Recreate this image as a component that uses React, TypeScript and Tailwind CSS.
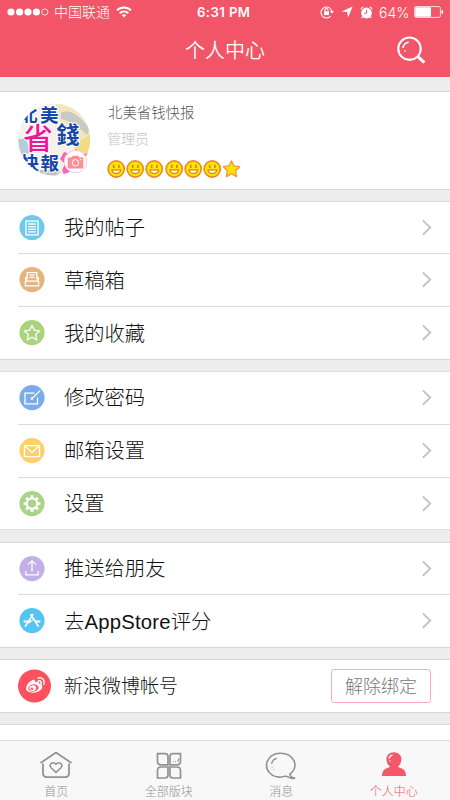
import type { ReactNode } from "react";

const cjk = "font-['Liberation_Sans','Noto_Sans_CJK_SC',sans-serif]";

function Disc({ color, children }: { color: string; children: ReactNode }) {
  return (
    <svg width="26" height="26" viewBox="0 0 26 26" fill="none" stroke="#fff" strokeWidth="1.3" className="shrink-0">
      <circle cx="13" cy="12.6" r="12.6" fill={color} stroke="none" />
      <g transform="translate(0 -.4)">{children}</g>
    </svg>
  );
}

function Chevron() {
  return (
    <svg width="12" height="18" viewBox="0 0 12 18" fill="none" stroke="#c4c4c8" strokeWidth="2" className="mr-[17px]">
      <path d="M1.8 1.4 9.2 8.6 1.8 15.8" />
    </svg>
  );
}

function Row({ icon, label, height, last, text = "" }: { icon: ReactNode; label: string; height: string; last?: boolean; text?: string }) {
  return (
    <div className={`ml-[18px] flex items-center ${height} ${last ? "" : "border-b border-[#dadadc]"}`}>
      <span className="ml-px flex">{icon}</span>
      <span className={`ml-[19px] flex-1 whitespace-nowrap text-[20.3px] leading-6 text-[#111] ${text}`}>{label}</span>
      <Chevron />
    </div>
  );
}

function Smiley() {
  return (
    <svg width="19.2" height="20" viewBox="0 0 19.2 20">
      <circle cx="9.2" cy="10" r="8.1" fill="#ffe500" stroke="#e88a2c" strokeWidth="1.6" />
      <path d="M6.7 5.8v3.2M11.9 5.8v3.2" stroke="#d9752a" strokeWidth="1.5" />
      <path d="M5 10.8h8.6c-.3 5-8.3 5-8.6 0Z" fill="#fff9c8" stroke="#df7d25" strokeWidth="1.2" />
    </svg>
  );
}

function StatusBar() {
  return (
    <div className="flex h-6 items-center pl-[7px] text-white">
      <svg width="42" height="10" viewBox="0 0 42 10" fill="#fff">
        <circle cx="4" cy="5" r="3.6" />
        <circle cx="12.6" cy="5" r="3.6" />
        <circle cx="21" cy="5" r="3.6" />
        <circle cx="29.4" cy="5" r="3.6" />
        <circle cx="37.8" cy="5" r="3.1" fill="none" stroke="#fff" strokeWidth="0.8" />
      </svg>
      <span className="ml-[5px] w-[57px] whitespace-nowrap text-[14px] font-light leading-5">中国联通</span>
      <svg width="16" height="12" viewBox="0 0 16 12" fill="none" stroke="#fff" strokeWidth="1.9" className="ml-[5px]">
        <path d="M1 4.4c3.8-3.9 10.2-3.9 14 0M3.6 7.2c2.6-2.4 6.2-2.4 8.8 0" />
        <path d="M5.6 9.1c1.4-1.2 3.4-1.2 4.8 0L8 11.6Z" fill="#fff" stroke="none" />
      </svg>
      <span className="ml-[65px] w-[58px] whitespace-nowrap pt-[2px] font-['Inter','Liberation_Sans',sans-serif] text-[13.2px] font-semibold tracking-[0.4px]">6:31 PM</span>
      <svg width="14" height="14" viewBox="0 0 14 14" fill="none" stroke="#fff" strokeWidth="1.1" className="ml-[65px]">
        <path d="M10.6 11.2A5.5 5.5 0 1 1 12 7" />
        <path d="M9.8 6h4L12 8.8Z" fill="#fff" stroke="none" />
        <path d="M4 6.4h5v3.7H4Z" fill="#fff" stroke="none" />
        <path d="M5 6.4V5a1.5 1.5 0 0 1 3 0v1.4" />
      </svg>
      <svg width="12" height="12" viewBox="0 0 12 12" fill="#fff" className="ml-[7px]">
        <path d="M11.6.4 7.1 11.4 6.2 6 .6 5.6Z" />
      </svg>
      <svg width="13" height="13" viewBox="0 0 13 13" fill="#fff" className="ml-[7px]">
        <circle cx="6.5" cy="7" r="5.4" />
        <path d="M.6 3.7A3 3 0 0 1 4 .8ZM12.4 3.7A3 3 0 0 0 9 .8ZM2 10l-.6 2.4 2.2-.8ZM11 10l.6 2.4-2.2-.8Z" />
        <path d="M6.6 3.8v3.4H4.2" fill="none" stroke="#f05567" />
      </svg>
      <span className="ml-[6px] w-[32px] whitespace-nowrap pt-px font-['Inter','Liberation_Sans',sans-serif] text-[14px] font-light">64%</span>
      <svg width="30" height="12" viewBox="0 0 30 12" className="ml-[3px]">
        <rect x=".6" y=".6" width="25.8" height="10.8" rx="1.5" fill="none" stroke="#fff" strokeWidth=".8" />
        <rect x="1.2" y="1.2" width="15.8" height="9.6" rx=".8" fill="#fff" />
        <path d="M27.5 4q1.8 0 1.8 2t-1.8 2Z" fill="#fff" />
      </svg>
    </div>
  );
}

function Avatar() {
  return (
    <div className="relative ml-[18px] size-[73px] shrink-0">
      <svg width="73" height="73" viewBox="0 0 73 73" className="overflow-visible">
        <defs>
          <clipPath id="face"><circle cx="36.2" cy="35.5" r="36" /></clipPath>
        </defs>
        <g clipPath="url(#face)">
          <rect width="73" height="73" fill="#f3f1ea" />
          <path d="M38 0h35v36H55L40 14Z" fill="#f1e6bd" />
          <path d="M43 9c9-5 18 2 29 16l-3 6C58 20 51 17 43 15Z" fill="#c9c8c3" />
          <path d="M57 40 73 30v37l-12 5-5-18Z" fill="#f1dc85" />
          <path d="M0 35h8l5 14-13 3Z" fill="#b9cbd8" />
          <path d="M22 66 43 67 37 73H20Z" fill="#b9c3ba" />
          <path d="m46 48 6 2 6-5 5 6 8-2-1 21-23 3-3-7 3-6-5-5Z" fill="#ff62ba" />
          <g className="font-['Noto_Sans_CJK_SC',sans-serif]" strokeLinejoin="round" paintOrder="stroke">
            <g fill="#1646a9" stroke="#fff" strokeWidth="2" fontWeight="700">
              <text x="2.5" y="17" fontSize="17">北</text>
              <text x="22" y="17.5" fontSize="18.5">美</text>
              <text x="38.5" y="39" fontSize="23">錢</text>
              <text x="2.5" y="66" fontSize="18.5">快</text>
              <text x="22.5" y="66" fontSize="18.5">報</text>
            </g>
            <text x="5" y="45" fontSize="30" fontWeight="500" fill="#ee169d" stroke="#fff" strokeWidth="2">省</text>
          </g>
        </g>
        <circle cx="57.5" cy="57.6" r="11.2" fill="#fff" stroke="#f3cce0" strokeWidth="1" />
        <path d="M50.5 53.5h3l1-1.7h6l1 1.7h3q.8 0 .8.8v9.4q0 .8-.8.8h-14q-.8 0-.8-.8v-9.4q0-.8.8-.8Z" fill="#ff8f96" />
        <circle cx="57.5" cy="58.8" r="3.2" fill="none" stroke="#fff" />
        <path d="M61.8 55.7h1.8" stroke="#fff" />
      </svg>
    </div>
  );
}

function Tab({ label, active, children }: { label: string; active?: boolean; children: ReactNode }) {
  return (
    <div className={`flex flex-1 flex-col items-center pt-[9px] ${active ? "text-[#f4566a]" : "text-[#929292]"}`}>
      <svg width="34" height="30" viewBox="0 0 34 30" fill="none" stroke="currentColor" strokeWidth="1.6">{children}</svg>
      <span className="mt-[4px] whitespace-nowrap text-[12px] font-light leading-4">{label}</span>
    </div>
  );
}

export default function App() {
  return (
    <div className={`flex h-[800px] w-[450px] flex-col overflow-hidden bg-[#ededed] font-light ${cjk}`}>
      <header className="h-[77px] shrink-0 bg-[#f15567]">
        <StatusBar />
        <div className="flex h-[53px] items-center text-white">
          <span className="w-[37px]" />
          <h1 className="flex-1 pl-[17px] pt-px text-center text-[20px] font-[350] leading-7">个人中心</h1>
          <svg width="30" height="30" viewBox="0 0 30 30" fill="none" stroke="#fff" strokeWidth="2.1" className="mr-[24px]">
            <circle cx="13.5" cy="12.7" r="11.2" />
            <path d="m21.6 20.4 6.8 6.2" strokeWidth="3" />
            <path d="M7 12c.3-3 2.7-5.5 5.8-5.7" strokeWidth="1.6" />
            <path d="M8 15h1.6" strokeWidth="1.5" />
          </svg>
        </div>
      </header>

      <section className="mt-[14px] flex h-[99px] shrink-0 items-center border-y border-[#d8d8da] bg-white">
        <Avatar />
        <div className="ml-[16px] flex flex-col">
          <span className="ml-px text-[14.4px] leading-5 text-[#555]">北美省钱快报</span>
          <span className="mt-[6px] text-[14px] leading-5 text-[#c2c2c2]">管理员</span>
          <div className="mt-[10px] flex h-5 items-center">
            <Smiley /><Smiley /><Smiley /><Smiley /><Smiley /><Smiley />
            <svg width="20" height="20" viewBox="0 0 20 20" fill="#ffe000" stroke="#ea963a" strokeWidth="1.2" strokeLinejoin="round">
              <path d="m9.5 1.8 2.5 5.1 5.7.8-4.1 4 1 5.9-5.1-2.8-5.1 2.8 1-5.9-4.1-4 5.7-.8Z" />
            </svg>
          </div>
        </div>
      </section>

      <section className="mt-[11px] shrink-0 border-y border-[#d8d8da] bg-white">
        <Row label="我的帖子" height="h-[52px]" icon={<Disc color="#70c9e8"><path d="M7 6.5h12v13.7H7ZM9.2 9.4h7.6M9.2 12h7.6M9.2 14.6h7.6M9.2 17.2h7.6" /></Disc>} />
        <Row label="草稿箱" height="h-[53px]" text="pt-[2px]" icon={<Disc color="#e3b57d"><path d="M8.2 13V6h9.6v7M10.5 8.5h5M10.5 10.8h5M8.2 11H6.8v3.5h12.4V11h-1.4M6.4 14.5v4.8h13.2v-4.8" /></Disc>} />
        <Row label="我的收藏" height="h-[52px]" text="pt-[2px]" last icon={<Disc color="#a9d47d"><path d="m13 5.8 2.3 4.8 5.2.7-3.8 3.6.9 5.2-4.6-2.5-4.6 2.5.9-5.2-3.8-3.6 5.2-.7Z" /></Disc>} />
      </section>

      <section className="mt-[11px] shrink-0 border-y border-[#dfdfe0] bg-white">
        <Row label="修改密码" height="h-[53px]" icon={<Disc color="#7aace8"><path d="M15.5 8.5H6v10.8h12.5V13M12.2 14.7l9-8.7M12.2 14.7l.4-1.8M12.2 14.7l1.9-.4" /></Disc>} />
        <Row label="邮箱设置" height="h-[53px]" icon={<Disc color="#ffd16d"><path d="M5.5 8h15v11h-15Zm.4.4 7.1 6.4 7.1-6.4" /></Disc>} />
        <Row label="设置" height="h-[51px]" text="pt-px" last icon={<Disc color="#a9d487"><circle cx="13" cy="13" r="5.2" strokeWidth="2.2" /><path d="M13 7.3V4.6M13 21.4v-2.7M7.3 13H4.6M21.4 13h-2.7M9 9 7.1 7.1M18.9 18.9 17 17M9 17l-1.9 1.9M18.9 7.1 17 9" strokeWidth="2.8" /></Disc>} />
      </section>

      <section className="mt-[12px] shrink-0 border-y border-[#d8d8da] bg-white">
        <Row label="推送给朋友" height="h-[52px]" icon={<Disc color="#c2afe8"><path d="M13 16V5.5M9 9l4-3.8L17 9M6.8 15.3v4h12.4v-4" /></Disc>} />
        <Row label="去AppStore评分" height="h-[52px]" text="pt-px tracking-[0.2px]" last icon={<Disc color="#54c5f2"><path d="M4.6 13.8H12M16.5 13.8h4.9" strokeWidth="2" /><path d="M14.2 6.5 6 19.2M11.4 6.5l8.2 12.7" strokeWidth="1.6" /><path d="m9.6 15.6 6-4.6" strokeWidth="1" /></Disc>} />
      </section>

      <section className="mt-[11px] flex h-[54px] shrink-0 items-center border-y border-[#d8d8da] bg-white">
        <svg width="34" height="34" viewBox="0 0 34 34" className="ml-[18px] shrink-0">
          <circle cx="16.5" cy="17" r="16.5" fill="#ff505f" />
          <path d="M14.5 11.1c1.9-.8 3 .1 2.4 2.1 2.2-1 4.7-.9 4.1 1.3 5 1.2 4.1 5.8-.7 8-5.4 2.4-12 1-12.2-2.7-.1-3 3-7.3 6.4-8.7Z" fill="#fff" />
          <ellipse cx="15.4" cy="19" rx="5.2" ry="3.6" transform="rotate(-7 15.4 19)" fill="#ff505f" />
          <ellipse cx="14.8" cy="19.2" rx="3.4" ry="2.8" transform="rotate(-15 14.8 19.2)" fill="#fff" />
          <circle cx="14" cy="19.8" r="1.3" fill="#ff505f" />
          <path d="M20.6 11.8c2-.3 3 1 2.5 2.9M20.2 9c4.3-.8 6.9 2.2 5.7 6.3" fill="none" stroke="#fff" strokeWidth="1.5" strokeLinecap="round" />
        </svg>
        <span className="ml-[12px] flex-1 whitespace-nowrap pt-[2px] text-[19px] leading-6 text-[#111]">新浪微博帐号</span>
        <button className="mr-[19px] h-[34px] w-[100px] whitespace-nowrap rounded-[3px] border border-[#ffabb3] pt-px text-[18px] leading-6 text-[#777]">解除绑定</button>
      </section>

      <div className="mt-[11px] h-[16px] shrink-0 border-t border-[#d8d8da] bg-white" />

      <nav className="flex h-[60px] shrink-0 border-t border-[#dedede] bg-[#f8f8f8]">
        <Tab label="首页">
          <path d="M1.5 13 17 2.6 32.5 13M4 13.5V23q0 4.2 4 4.2h18q4 0 4-4.2v-9.5" strokeWidth="1.8" />
          <path d="m17 22.5-4.9-4.8c-3-3.4 2-6.8 4.9-3.5 2.9-3.3 7.9.1 4.9 3.5Z" />
        </Tab>
        <Tab label="全部版块">
          <path d="M5.5 3.7H13q3 0 3 3v8.1H9q-3.5 0-3.5-3.5ZM28.5 3.7H21q-3 0-3 3v8.1h7q3.5 0 3.5-3.5ZM5.5 28H13q3 0 3-3v-8H9q-3.5 0-3.5 3.5ZM28.5 28H21q-3 0-3-3v-8h7q3.5 0 3.5 3.5Z" strokeWidth="1.7" />
          <path d="M20.7 11.8h1M23 11.8h1M25.4 11.5q1.2-.2 1.2-3" strokeWidth="1.1" />
        </Tab>
        <Tab label="消息">
          <path d="M25.7 24.2c4.2-3.2 6.3-8.2 4.5-13C25 .6 7.7.6 3.2 11.5.2 20.4 8.4 28.2 17.6 27c2 0 2.7-1 4.3-.7 2.6.3 5.3 3.1 9.3 1.8-2.6-.2-4.4-1.3-5.5-3.9Z" />
          <path d="M7.7 14c.3-3.2 2.3-5 5-5.5M7.8 17.2h.6M9.2 19.6h.6" strokeWidth="1.3" />
        </Tab>
        <Tab label="个人中心" active>
          <path d="M16.8 2.2c4.5 0 8 3.3 7.6 7.4-.2 2.8-1.2 5-3.4 7 1.2 1.6 3.5 1.2 5.5 3 1.7 1.6 2.5 3.8 2.6 6.3H5c0-2.6.8-4.7 2.5-6.3 2-1.8 4.2-1.4 5.5-3-2.3-2-3.4-4.2-3.6-7-.3-4.1 3-7.4 7.4-7.4Z" fill="currentColor" stroke="none" />
          <path d="M12 8.7c.4-2 1.8-3.3 3.5-3.5M12.5 11h1" stroke="#fff" strokeWidth="1.3" />
        </Tab>
      </nav>
    </div>
  );
}
